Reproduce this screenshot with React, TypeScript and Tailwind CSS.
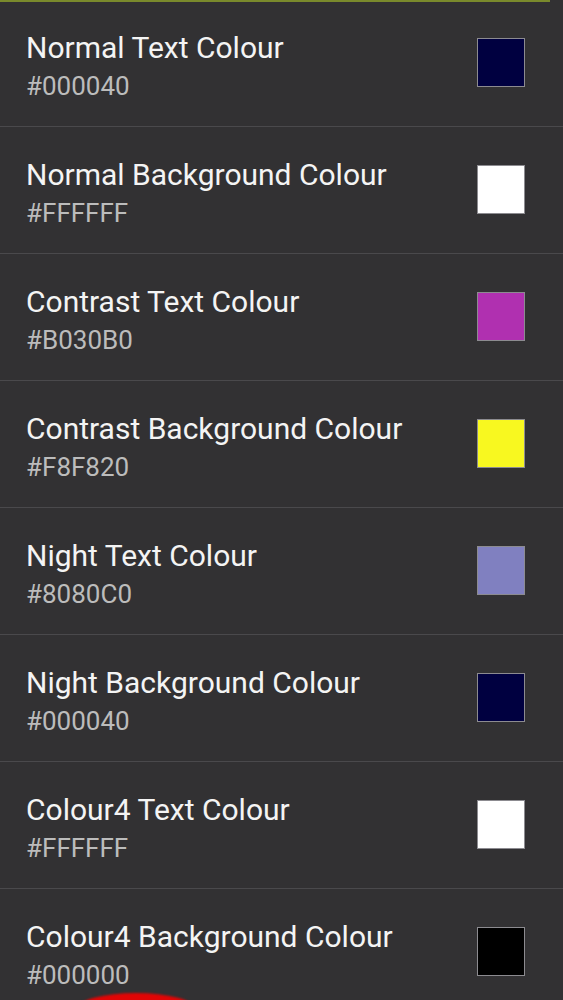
const COLOURS = [
  { label: 'Normal Text Colour', hex: '#000040', swatch: 'bg-[#000040]' },
  { label: 'Normal Background Colour', hex: '#FFFFFF', swatch: 'bg-[#ffffff]' },
  { label: 'Contrast Text Colour', hex: '#B030B0', swatch: 'bg-[#b030b0]' },
  { label: 'Contrast Background Colour', hex: '#F8F820', swatch: 'bg-[#f8f820]' },
  { label: 'Night Text Colour', hex: '#8080C0', swatch: 'bg-[#8080c0]' },
  { label: 'Night Background Colour', hex: '#000040', swatch: 'bg-[#000040]' },
  { label: 'Colour4 Text Colour', hex: '#FFFFFF', swatch: 'bg-[#ffffff]' },
  { label: 'Colour4 Background Colour', hex: '#000000', swatch: 'bg-[#000000]' },
];

export default function App() {
  return (
    <div
      className="relative w-[563px] h-[1000px] overflow-hidden bg-[#323133]"
      style={{ fontFamily: 'Roboto, "Noto Sans", sans-serif' }}
    >
      {/* accent line left over from the toolbar */}
      <div className="absolute top-0 left-0 w-[550px] h-[2px] bg-[#7a8a2c]" />

      <ul className="flex flex-col">
        {COLOURS.map(({ label, hex, swatch }, i) => (
          <li
            key={i}
            className="flex justify-between h-[127px] pl-[26px] pr-[38px] border-b border-[#4a494c]"
          >
            <div className="flex flex-col gap-[6px] pt-[31px]">
              <span className="text-[30px] leading-[34px] text-[#f4f4f4]">{label}</span>
              <span className="text-[26px] leading-[30px] text-[#bcbcbc]">{hex}</span>
            </div>
            <div className={`self-center mb-[1px] w-[48px] h-[49px] border border-[#8c8b90] ${swatch}`} />
          </li>
        ))}
      </ul>

      {/* top of the red button peeking in below the fold */}
      <div className="absolute left-[78px] top-[993px] w-[116px] h-[30px] rounded-[50%] bg-[#e00505] blur-[1px]" />
    </div>
  );
}
